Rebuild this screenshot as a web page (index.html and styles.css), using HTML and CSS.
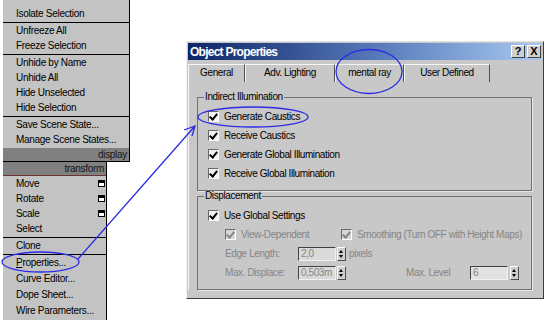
FILE: index.html
```html
<!DOCTYPE html>
<html lang="en">
<head>
    <meta charset="UTF-8">
    <title>Object Properties - mental ray</title>
    <link rel="stylesheet" href="styles.css">
</head>
<body>

<div class="page">

    <!-- Quad menu: display + transform quadrants -->
    <div class="quads">
        <div class="quad quad-display">
            <div class="quad-group">
                <div class="quad-item">Isolate Selection</div>
            </div>
            <div class="quad-group">
                <div class="quad-item">Unfreeze All</div>
                <div class="quad-item">Freeze Selection</div>
            </div>
            <div class="quad-group">
                <div class="quad-item">Unhide by Name</div>
                <div class="quad-item">Unhide All</div>
                <div class="quad-item">Hide Unselected</div>
                <div class="quad-item">Hide Selection</div>
            </div>
            <div class="quad-group">
                <div class="quad-item">Save Scene State...</div>
                <div class="quad-item">Manage Scene States...</div>
            </div>
            <div class="quad-title">display</div>
        </div>

        <div class="quad quad-transform">
            <div class="quad-title">transform</div>
            <div class="quad-group">
                <div class="quad-item">Move <span class="opt-box"></span></div>
                <div class="quad-item">Rotate <span class="opt-box"></span></div>
                <div class="quad-item">Scale <span class="opt-box"></span></div>
                <div class="quad-item">Select</div>
            </div>
            <div class="quad-group">
                <div class="quad-item">Clone</div>
            </div>
            <div class="quad-group quad-group-tall">
                <div class="quad-item"><span><u>P</u>roperties...</span></div>
                <div class="quad-item">Curve Editor...</div>
                <div class="quad-item">Dope Sheet...</div>
                <div class="quad-item">Wire Parameters...</div>
            </div>
        </div>
    </div>

    <!-- Object Properties dialog -->
    <div class="dialog">
        <div class="titlebar">
            <span class="title">Object Properties</span>
            <span class="title-buttons">
                <span class="tb-btn">?</span>
                <span class="tb-btn">X</span>
            </span>
        </div>

        <div class="tabs">
            <div class="tab tab-general">General</div>
            <div class="tab tab-lighting">Adv. Lighting</div>
            <div class="tab tab-mray">mental ray</div>
            <div class="tab tab-user">User Defined</div>
        </div>

        <div class="tab-panel">
            <fieldset class="group">
                <legend>Indirect Illumination</legend>
                <div class="row"><span class="check"></span>Generate Caustics</div>
                <div class="row"><span class="check"></span>Receive Caustics</div>
                <div class="row"><span class="check"></span>Generate Global Illumination</div>
                <div class="row"><span class="check"></span>Receive Global Illumination</div>
            </fieldset>

            <fieldset class="group">
                <legend>Displacement</legend>
                <div class="row"><span class="check"></span>Use Global Settings</div>
                <div class="row row-sub disabled">
                    <span class="cell-view"><span class="check"></span>View-Dependent</span>
                    <span class="check"></span>Smoothing (Turn OFF with Height Maps)
                </div>
                <div class="row row-sub disabled">
                    <span class="label">Edge Length:</span>
                    <span class="field">2,0</span>
                    <span class="spinner"></span>
                    <span class="unit">pixels</span>
                </div>
                <div class="row row-sub disabled">
                    <span class="label">Max. Displace:</span>
                    <span class="field">0,503m</span>
                    <span class="spinner"></span>
                    <span class="label label-level">Max. Level</span>
                    <span class="field field-level">6</span>
                    <span class="spinner"></span>
                </div>
            </fieldset>
        </div>
    </div>

    <!-- Hand-drawn annotations -->
    <svg class="notes" width="548" height="320" viewBox="0 0 548 320">
        <ellipse cx="369" cy="71.5" rx="33" ry="22"/>
        <ellipse cx="253" cy="117" rx="55" ry="10"/>
        <ellipse cx="40.5" cy="262" rx="38.5" ry="10"/>
        <path d="M78 259 L195 126 M184 130 L195 126 L192 136"/>
    </svg>
</div>

</body>
</html>
```

FILE: styles.css
```css
/* Basic reset */
body {
    margin: 0;
    background: #fff;
    font-family: 'Liberation Sans', Arial, sans-serif;
    color: #000;
}

:root {
    --menu-bg: #c3c3c3;
    --dialog-bg: #c8c8c8;
    --dark-edge: #3c3c3c;
    --group-line: #707070;
    --disabled: #858585;
    --ink-blue: #2b2be6;
}

.page {
    position: relative;
    width: 548px;
    height: 320px;
    overflow: hidden;
    display: flex;
    align-items: flex-start;
}

/* Quad menu */
.quads {
    margin-left: 3px;
    width: 127px;
}

.quad {
    background: var(--menu-bg);
    border-right: 1px solid #000;
    font-size: 10px;
    letter-spacing: -0.3px;
}

.quad-display {
    width: 126px;
}

.quad-transform {
    width: 103px;
}

.quad-group {
    padding-bottom: 1px;
}

.quad-display .quad-group:first-child {
    padding-top: 6px;
}

.quad-group + .quad-group {
    border-top: 1px solid #000;
}

.quad-item {
    height: 15px;
    line-height: 15px;
    padding-left: 13px;
    padding-right: 1px;
    display: flex;
    align-items: center;
    justify-content: space-between;
    white-space: nowrap;
}

.quad-group-tall .quad-item {
    height: 16px;
    line-height: 16px;
}

.quad-title {
    height: 13px;
    line-height: 13px;
    background: #808080;
    color: #151515;
    text-align: right;
    padding-right: 2px;
    border-bottom: 1px solid #000;
}

.quad-transform .quad-title {
    border-bottom-color: #6a3434;
}

.opt-box {
    box-sizing: border-box;
    width: 7px;
    height: 7px;
    border: 1px solid #000;
    border-top-width: 3px;
    background: #fff;
}

/* Dialog window */
.dialog {
    box-sizing: border-box;
    margin-left: 56px;
    margin-top: 41px;
    width: 358px;
    height: 258px;
    padding: 1px;
    background: var(--dialog-bg);
    border-left: 1px solid #f4f4f4;
    border-top: 1px solid #e2e2e2;
    border-right: 1px solid var(--dark-edge);
    border-bottom: 1px solid var(--dark-edge);
    font-size: 10px;
    letter-spacing: -0.4px;
}

.titlebar {
    height: 17px;
    display: flex;
    align-items: center;
    justify-content: space-between;
    padding: 0 1px 0 2px;
    background: linear-gradient(to right, #0c2668, #5a7cbc 55%, #a8caf0);
}

.title {
    color: #fff;
    font-size: 12px;
    font-weight: 700;
    letter-spacing: -0.75px;
}

.title-buttons {
    display: flex;
    gap: 2px;
}

.tb-btn {
    box-sizing: border-box;
    width: 14px;
    height: 13px;
    line-height: 11px;
    text-align: center;
    font-size: 11px;
    font-weight: 700;
    letter-spacing: 0;
    background: #d2d0cc;
    border-top: 1px solid #fff;
    border-left: 1px solid #fff;
    border-right: 1px solid #404040;
    border-bottom: 1px solid #404040;
}

/* Tabs */
.tabs {
    display: flex;
    margin-top: 4px;
    height: 18px;
}

.tab {
    box-sizing: border-box;
    height: 18px;
    line-height: 16px;
    text-align: center;
    border-top: 1px solid #f6f6f6;
    border-left: 1px solid #f6f6f6;
    border-right: 1px solid #505050;
    white-space: nowrap;
}

.tab-general  { width: 57px; }
.tab-lighting { width: 90px; }
.tab-mray     { width: 69px; }
.tab-user     { width: 86px; }

.tab-panel {
    border-left: 1px solid #f4f4f4;
    padding: 10px 10px 0 8px;
}

/* Group boxes */
.group {
    margin: 0;
    min-width: 0;
    padding: 5px 0 7px 10px;
    border: 1px solid var(--group-line);
    box-shadow: 1px 1px 0 #e6e6e6;
}

.group legend {
    font-size: 10px;
    line-height: 10px;
    padding: 0 1px;
    margin-left: -4px;
}

.row {
    height: 19px;
    display: flex;
    align-items: center;
    white-space: nowrap;
}

.row-sub {
    padding-left: 17px;
}

.disabled {
    color: var(--disabled);
}

.cell-view {
    display: flex;
    align-items: center;
    width: 116px;
}

/* Checkbox */
.check {
    position: relative;
    box-sizing: border-box;
    width: 11px;
    height: 11px;
    margin-right: 5px;
    flex: none;
    background: #f2f2f2;
    border-top: 1px solid #6a6a6a;
    border-left: 1px solid #6a6a6a;
    border-right: 1px solid #fff;
    border-bottom: 1px solid #fff;
}

.check::after {
    content: "";
    position: absolute;
    left: 2px;
    top: 0;
    width: 3px;
    height: 6px;
    border-right: 2px solid #000;
    border-bottom: 2px solid #000;
    transform: rotate(40deg);
}

.disabled .check {
    background: #d6d6d6;
}

.disabled .check::after {
    border-color: var(--disabled);
}

/* Numeric fields */
.label {
    width: 73px;
}

.label-level {
    width: 64px;
    margin-left: 57px;
}

.field {
    box-sizing: border-box;
    width: 38px;
    height: 14px;
    line-height: 12px;
    padding-left: 2px;
    margin-right: 1px;
    background: #dadada;
    border-top: 1px solid #404040;
    border-left: 1px solid #404040;
    border-right: 1px solid #f2f2f2;
    border-bottom: 1px solid #f2f2f2;
}

.field-level {
    background: #e2e2e2;
    margin-right: 2px;
}

.spinner {
    position: relative;
    box-sizing: border-box;
    width: 9px;
    height: 14px;
    margin-right: 3px;
    background: #cfcfcf;
    border-top: 1px solid #fff;
    border-left: 1px solid #fff;
    border-right: 1px solid #505050;
    border-bottom: 1px solid #505050;
}

.spinner::before,
.spinner::after {
    content: "";
    position: absolute;
    left: 1px;
    border-left: 2.5px solid transparent;
    border-right: 2.5px solid transparent;
}

.spinner::before {
    top: 2px;
    border-bottom: 3px solid #000;
}

.spinner::after {
    bottom: 2px;
    border-top: 3px solid #000;
}

/* Annotations drawn over the screenshot */
.notes {
    position: absolute;
    left: 0;
    top: 0;
    pointer-events: none;
    fill: none;
    stroke: var(--ink-blue);
    stroke-width: 1.3;
}
```
